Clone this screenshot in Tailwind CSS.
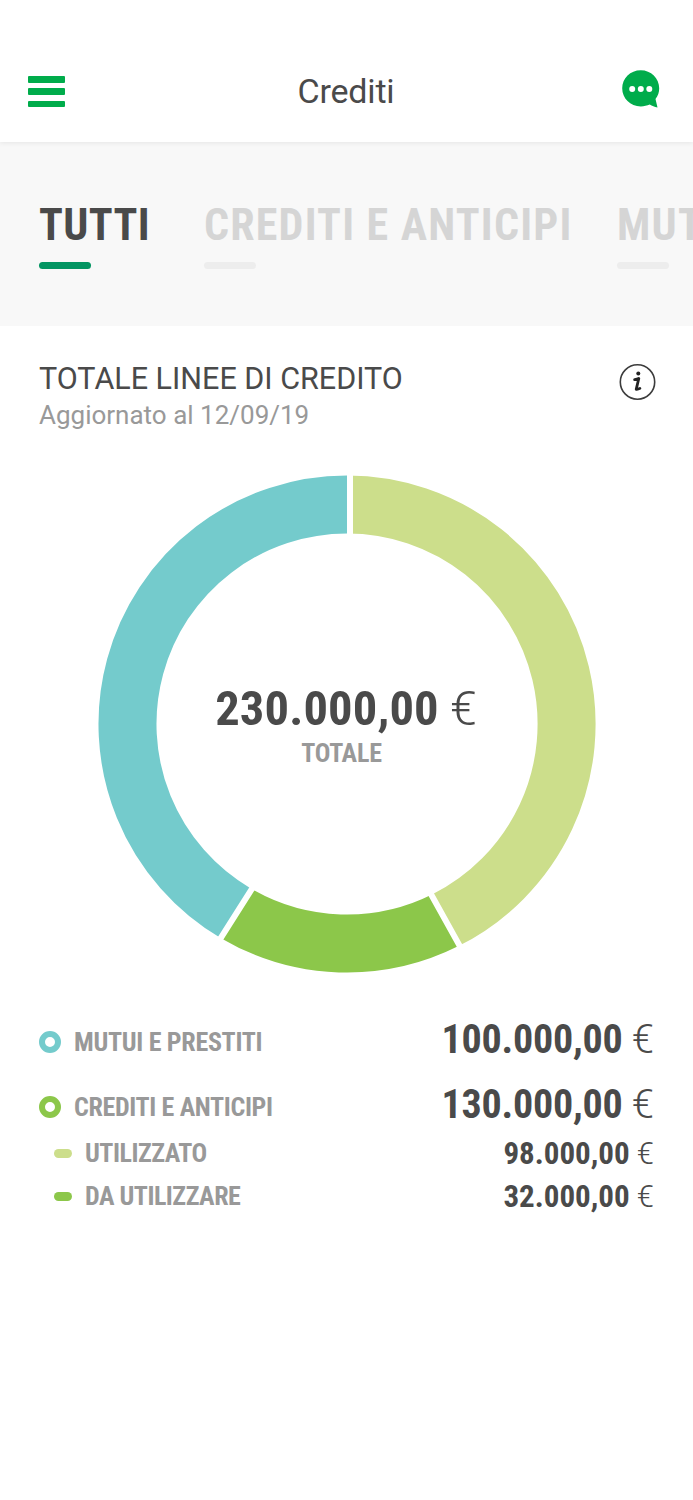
<!DOCTYPE html>
<html lang="it">
<head>
    <meta charset="UTF-8">
    <meta name="viewport" content="width=device-width, initial-scale=1.0">
    <title>Crediti</title>
    <script src="https://cdn.jsdelivr.net/npm/@tailwindcss/browser@4"></script>
</head>
<body class="bg-white font-['Roboto',sans-serif] text-[#4a4a4a] overflow-hidden">
    <div class="w-[693px] h-[1500px] overflow-hidden">
        <!-- Header -->
        <header class="relative h-[142px] pt-[60px] pl-7 pr-[33px] flex items-start justify-between shadow-[0_1px_5px_rgba(0,0,0,0.08)]">
            <button class="w-[37px] h-[31px] mt-4 flex flex-col justify-between" aria-label="Menu">
                <span class="block w-full h-[6.5px] rounded-[1px] bg-[#00ac4b]"></span>
                <span class="block w-full h-[6.5px] rounded-[1px] bg-[#00ac4b]"></span>
                <span class="block w-full h-[6.5px] rounded-[1px] bg-[#00ac4b]"></span>
            </button>
            <h1 class="ml-[5px] text-[34px] leading-[62px] tracking-[-0.2px]">Crediti</h1>
            <svg class="w-[38px] h-[38px] mt-[10px]" viewBox="0 0 38 38">
                <path d="M18.8.2C29 .2 37.2 8.2 37.2 18.300c0 4.200-1.200 7.500-3.700 10.700l2 8.400c-3-.400-5.500-1.400-7.700-2.800-2.700 1.200-5.700 1.800-9 1.800C8.300 36.400.2 28.400.2 18.300S8.300.2 18.800.2Z" fill="#00ac4b"/>
                <circle cx="10.200" cy="19" r="3" fill="#fff"/>
                <circle cx="18.800" cy="19" r="3" fill="#fff"/>
                <circle cx="27.300" cy="19" r="3" fill="#fff"/>
            </svg>
        </header>

        <!-- Tabs -->
        <nav class="h-[184px] bg-[#f8f8f8] pl-[39px] pt-[57px] flex overflow-hidden whitespace-nowrap font-bold font-stretch-condensed text-[44px] leading-[52px] tracking-[1.2px]">
            <div class="w-[165px] shrink-0">
                <div class="tracking-[0.4px]">TUTTI</div>
                <div class="mt-[11px] w-[52px] h-[7px] rounded-full bg-[#039562]"></div>
            </div>
            <div class="w-[413px] shrink-0 text-[#d5d5d5]">
                <div>CREDITI E ANTICIPI</div>
                <div class="mt-[11px] w-[52px] h-[7px] rounded-full bg-[#ededed]"></div>
            </div>
            <div class="shrink-0 text-[#d5d5d5]">
                <div>MUTUI E PRESTITI</div>
                <div class="mt-[11px] w-[52px] h-[7px] rounded-full bg-[#ededed]"></div>
            </div>
        </nav>

        <main class="pl-[39px] pr-[37px]">
            <div class="flex justify-between pt-9 h-[149px]">
                <div>
                    <h2 class="text-[30.500px] leading-[34px]">TOTALE LINEE DI CREDITO</h2>
                    <p class="text-[26px] leading-[38px] text-[#999]">Aggiornato al 12/09/19</p>
                </div>
                <svg class="w-[38px] h-[38px] mt-px" viewBox="0 0 38 38" fill="none" stroke="#3c3c3c">
                    <circle cx="19.500" cy="19" r="17.200" stroke-width="1.600"/>
                    <circle cx="20.300" cy="10.400" r="2" fill="#222" stroke="none"/>
                    <path d="M16.600 16.700q2.800-.200 4.200-1.200l-2.600 10.800q1.900.200 3.700-.900" stroke="#222" stroke-width="2.800" stroke-linecap="round" stroke-linejoin="round"/>
                </svg>
            </div>

            <!-- Donut chart -->
            <div class="grid justify-items-center -ml-[39px] -mr-[37px] h-[499px]">
                <svg class="col-start-1 row-start-1 w-[693px] h-[499px]" viewBox="0 475 693 499" fill="none" stroke-width="58">
                    <path d="M347 504.500A219.500 219.500 0 0 1 445.500 920.200" stroke="#ccde8b"/>
                    <path d="M445.500 920.200A219.500 219.500 0 0 1 235.700 913.200" stroke="#8cc74a"/>
                    <path d="M235.700 913.200A219.500 219.500 0 0 1 347 504.500" stroke="#74cbcc"/>
                    <path d="M350 465v80M426.600 886.200l37.800 68.200M257.300 880.300l-42.600 67.400" stroke="#fff" stroke-width="6"/>
                </svg>
                <div class="col-start-1 row-start-1 pt-[205px] text-center font-stretch-condensed">
                    <div class="text-[48.500px] leading-[58px] -ml-px"><b class="tracking-[0.15px]">230.000,00</b> <span class="font-light font-stretch-normal">€</span></div>
                    <div class="text-[26px] leading-[30px] font-bold tracking-[-0.2px] text-[#999] -ml-[10px]">TOTALE</div>
                </div>
            </div>

            <!-- Legend -->
            <div class="pt-[33px] pr-[2px] font-stretch-condensed">
                <div class="flex items-center h-[65px]">
                    <span class="mt-1 size-[22px] rounded-full border-[6.5px] border-[#74cbcc]"></span>
                    <span class="mt-[5px] ml-[13px] text-[26px] font-bold tracking-[-0.300px] text-[#999]">MUTUI E PRESTITI</span>
                    <span class="ml-auto text-[40px]"><b class="tracking-[-0.2px]">100.000,00</b> <span class="font-light font-stretch-normal">€</span></span>
                </div>
                <div class="flex items-center h-[65px]">
                    <span class="mt-1 size-[22px] rounded-full border-[6.5px] border-[#8cc74a]"></span>
                    <span class="mt-[5px] ml-[13px] text-[26px] font-bold tracking-[-0.35px] text-[#999]">CREDITI E ANTICIPI</span>
                    <span class="ml-auto text-[40px]"><b class="tracking-[-0.2px]">130.000,00</b> <span class="font-light font-stretch-normal">€</span></span>
                </div>
                <div class="-mt-[5px] flex items-center h-[43px]">
                    <span class="ml-[15px] w-[18px] h-[9px] rounded-full bg-[#ccde8b]"></span>
                    <span class="ml-[13px] text-[26px] font-bold tracking-[-0.5px] text-[#999]">UTILIZZATO</span>
                    <span class="ml-auto mt-px text-[31px]"><b>98.000,00</b> <span class="font-light font-stretch-normal">€</span></span>
                </div>
                <div class="flex items-center h-[43px]">
                    <span class="ml-[15px] w-[18px] h-[9px] rounded-full bg-[#8cc74a]"></span>
                    <span class="ml-[13px] text-[26px] font-bold tracking-[-0.5px] text-[#999]">DA UTILIZZARE</span>
                    <span class="ml-auto mt-px text-[31px]"><b>32.000,00</b> <span class="font-light font-stretch-normal">€</span></span>
                </div>
            </div>
        </main>
    </div>
</body>
</html>
